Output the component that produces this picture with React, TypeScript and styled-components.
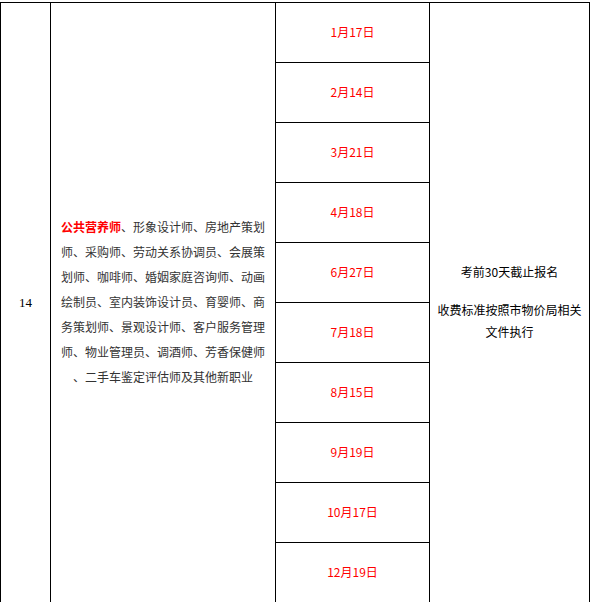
import React from "react";
import styled, { createGlobalStyle } from "styled-components";

const Global = createGlobalStyle`
  html, body { margin: 0; padding: 0; background: #fff; }
  body { font-family: "Noto Sans CJK SC", "Liberation Sans", sans-serif; }
`;

const Table = styled.div`
  margin-top: 2px;
  display: grid;
  grid-template-columns: 50px 225px 154px 160px;
  grid-template-rows: repeat(10, 60px);
  width: 590px;
  box-sizing: border-box;
  border-left: 1px solid #000;
  border-top: 1px solid #000;
`;

const Cell = styled.div<{ $span?: boolean; $col: number; $lift?: number }>`
  grid-column: ${(p) => p.$col};
  grid-row: ${(p) => (p.$span ? "1 / span 10" : "auto")};
  box-sizing: border-box;
  border-right: 1px solid #000;
  border-bottom: 1px solid #000;
  padding-bottom: ${(p) => p.$lift ?? 0}px;
  display: flex;
  align-items: center;
  justify-content: center;
  text-align: center;
  font-size: 12px;
`;

const IndexCell = styled(Cell)`
  font-family: "Liberation Serif", serif;
  font-size: 13px;
  color: #000;
`;

const JobText = styled.div`
  font-size: 12px;
  line-height: 25px;
  color: #333;
  white-space: nowrap;
`;

const Strong = styled.strong`
  color: #f00;
  font-weight: bold;
`;

const DateCell = styled(Cell)`
  color: #f00;
  font-size: 12px;
`;

const NoteText = styled.div`
  color: #000;
  font-size: 12px;
  line-height: 22px;
`;

const NotePara = styled.p`
  margin: 0;
  & + & { margin-top: 16px; }
`;

const dates = [
  "1月17日",
  "2月14日",
  "3月21日",
  "4月18日",
  "6月27日",
  "7月18日",
  "8月15日",
  "9月19日",
  "10月17日",
  "12月19日",
];

const jobLines = [
  "师、采购师、劳动关系协调员、会展策",
  "划师、咖啡师、婚姻家庭咨询师、动画",
  "绘制员、室内装饰设计员、育婴师、商",
  "务策划师、景观设计师、客户服务管理",
  "师、物业管理员、调酒师、芳香保健师",
  "、二手车鉴定评估师及其他新职业",
];

export default function App() {
  return (
    <>
      <Global />
      <Table>
        <IndexCell $col={1} $span>
          14
        </IndexCell>
        <Cell $col={2} $span $lift={3}>
          <JobText>
            <Strong>公共营养师</Strong>、形象设计师、房地产策划
            {jobLines.map((l, i) => (
              <React.Fragment key={i}>
                <br />
                {l}
              </React.Fragment>
            ))}
          </JobText>
        </Cell>
        {dates.map((d, i) => (
          <DateCell key={d} $col={3} $lift={2} style={{ gridRow: i + 1 }}>
            {d}
          </DateCell>
        ))}
        <Cell $col={4} $span $lift={2}>
          <NoteText>
            <NotePara>考前30天截止报名</NotePara>
            <NotePara>
              收费标准按照市物价局相关
              <br />
              文件执行
            </NotePara>
          </NoteText>
        </Cell>
      </Table>
    </>
  );
}
